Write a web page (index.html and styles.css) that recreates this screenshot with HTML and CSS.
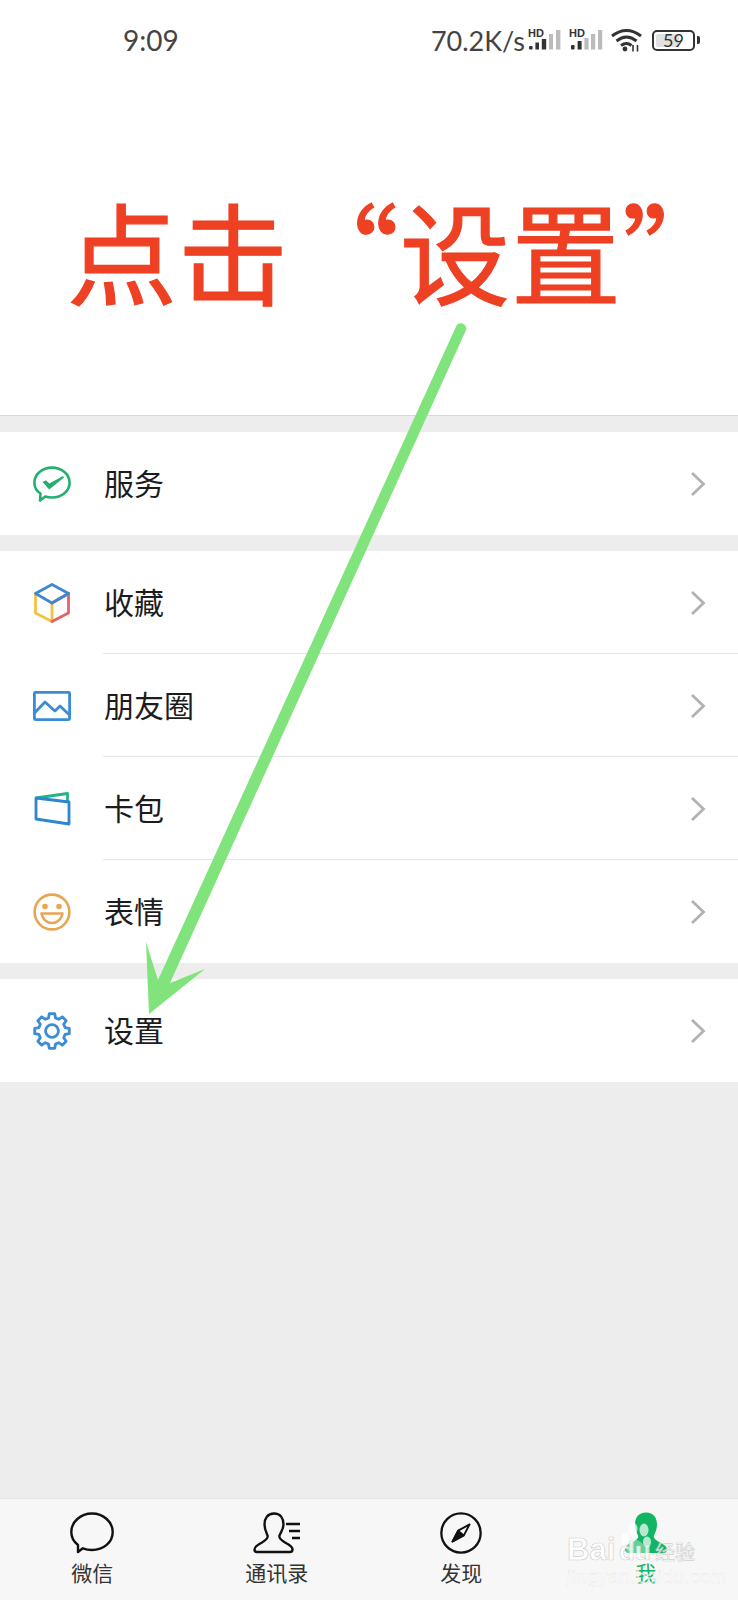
FILE: index.html
```html
<!DOCTYPE html>
<html lang="zh-CN">
<head>
    <meta charset="UTF-8">
    <meta name="viewport" content="width=device-width, initial-scale=1.0">
    <title>点击设置</title>
    <link rel="stylesheet" href="styles.css">
</head>
<body>

    <div class="phone">
        <div class="top-area">
            <div class="status-bar">
                <span class="clock">9:09</span>
                <div class="status-right">
                    <span class="net-speed">70.2K/s</span>
                    <svg class="signal" width="36" height="24" viewBox="0 0 36 24">
                        <text x="1" y="9" class="hd-text">HD</text>
                        <rect x="2" y="18" width="3.6" height="3.5" rx="1" fill="#333"/>
                        <rect x="8.4" y="14.5" width="3.6" height="7" fill="#333"/>
                        <rect x="14.8" y="11" width="4.4" height="10.5" fill="#333"/>
                        <rect x="22" y="6" width="4" height="15.5" fill="#bbb"/>
                        <rect x="29" y="2" width="4.4" height="19.5" fill="#bbb"/>
                    </svg>
                    <svg class="signal second" width="36" height="24" viewBox="0 0 36 24">
                        <text x="1" y="9" class="hd-text">HD</text>
                        <rect x="3" y="17" width="3.6" height="4.5" rx="1" fill="#333"/>
                        <rect x="9.6" y="13" width="4" height="8.5" fill="#333"/>
                        <rect x="16.4" y="10" width="4.2" height="11.5" fill="#bbb"/>
                        <rect x="23" y="6" width="4.2" height="15.5" fill="#bbb"/>
                        <rect x="30" y="2" width="4.2" height="19.5" fill="#bbb"/>
                    </svg>
                    <svg class="wifi" width="31" height="24" viewBox="0 0 31 24" fill="none" stroke="#333" stroke-width="3">
                        <path d="M1 8 Q15.5 -3 30 8"/>
                        <path d="M5.5 13 Q15.5 5 25.5 13"/>
                        <path d="M10 17.5 Q15.5 13.5 20.5 17.5"/>
                        <circle cx="14" cy="21" r="2.4" fill="#333" stroke="none"/>
                        <path d="M22 17 V23.5 M26.5 17 V23.5" stroke-width="1.6"/>
                    </svg>
                    <div class="battery">
                        <div class="battery-body"><span class="battery-fill"></span><span class="battery-num">59</span></div>
                        <span class="battery-tip"></span>
                    </div>
                </div>
            </div>
            <div class="big-title">点击“设置”</div>
        </div>

        <div class="menu-group">
            <div class="menu-row">
                <svg class="menu-icon" width="38" height="36" viewBox="0 0 38 36" fill="none">
                    <path d="M7.5 27.5 C3.5 25 1.4 21.3 1.4 16.7 C1.4 8.4 9.2 1.6 19 1.6 C28.8 1.6 36.6 8.4 36.6 16.7 C36.6 25 28.8 31.5 19 31.5 C16.6 31.5 14.4 31.2 12.3 30.5 L7 34.5 Z" stroke="#22b06e" stroke-width="2.6" stroke-linejoin="round"/>
                    <path d="M9.5 16 L13 14.2 L16.4 17.6 L30 10 L31 11.4 L16.2 23.5 Z" fill="#22b06e"/>
                </svg>
                <span class="menu-label">服务</span>
                <svg class="chevron" width="16" height="26" viewBox="0 0 16 26"><path d="M2 2 L13.5 13 L2 24" fill="none" stroke="#b2b2b2" stroke-width="2.8"/></svg>
            </div>
        </div>

        <div class="menu-group">
            <div class="menu-row">
                <svg class="menu-icon" width="38" height="40" viewBox="0 0 38 40" fill="none" stroke-width="2.8" stroke-linejoin="round" stroke-linecap="round">
                    <path d="M2.5 30 V10.5 M2.5 30 L19 38.5 V20" stroke="#f2c245"/>
                    <path d="M35.5 10.5 V30 L19 38.5" stroke="#e0636a"/>
                    <path d="M35.5 10.5 L19 20" stroke="#e0636a"/>
                    <path d="M19 1.5 L35.5 10.5 L19 20 L2.5 10.5 Z" stroke="#3f87d4"/>
                </svg>
                <span class="menu-label">收藏</span>
                <svg class="chevron" width="16" height="26" viewBox="0 0 16 26"><path d="M2 2 L13.5 13 L2 24" fill="none" stroke="#b2b2b2" stroke-width="2.8"/></svg>
            </div>
            <div class="menu-row">
                <svg class="menu-icon" width="38" height="30" viewBox="0 0 38 30" fill="none" stroke="#3a8cd6" stroke-width="2.8" stroke-linejoin="round">
                    <rect x="1.4" y="1.4" width="35.2" height="27.2" rx="1"/>
                    <path d="M1.5 22 L12 11 L22 20 L27 15 L36.5 24"/>
                </svg>
                <span class="menu-label">朋友圈</span>
                <svg class="chevron" width="16" height="26" viewBox="0 0 16 26"><path d="M2 2 L13.5 13 L2 24" fill="none" stroke="#b2b2b2" stroke-width="2.8"/></svg>
            </div>
            <div class="menu-row">
                <svg class="menu-icon" width="38" height="34" viewBox="0 0 38 34" fill="none" stroke-width="2.8" stroke-linejoin="round">
                    <path d="M3 6 L34.5 1.5 V9" stroke="#22b58a"/>
                    <path d="M3 6 L36 10 V32 L3 27 Z" stroke="#2f86d0"/>
                </svg>
                <span class="menu-label">卡包</span>
                <svg class="chevron" width="16" height="26" viewBox="0 0 16 26"><path d="M2 2 L13.5 13 L2 24" fill="none" stroke="#b2b2b2" stroke-width="2.8"/></svg>
            </div>
            <div class="menu-row">
                <svg class="menu-icon" width="38" height="38" viewBox="0 0 38 38" fill="none" stroke="#e8a655" stroke-width="2.6">
                    <circle cx="19" cy="19" r="17.4"/>
                    <circle cx="12" cy="13.5" r="2.8" fill="#e8a655" stroke="none"/>
                    <circle cx="26" cy="13.5" r="2.8" fill="#e8a655" stroke="none"/>
                    <path d="M8.5 20.5 H29.5 C28.5 26.5 24 30 19 30 C14 30 9.5 26.5 8.5 20.5 Z" stroke-linejoin="round"/>
                </svg>
                <span class="menu-label">表情</span>
                <svg class="chevron" width="16" height="26" viewBox="0 0 16 26"><path d="M2 2 L13.5 13 L2 24" fill="none" stroke="#b2b2b2" stroke-width="2.8"/></svg>
            </div>
        </div>

        <div class="menu-group">
            <div class="menu-row">
                <svg class="menu-icon" width="38" height="38" viewBox="-19 -19 38 38" fill="none" stroke="#3a8cd6" stroke-width="2.8" stroke-linejoin="round">
                    <path d="M-3.49 -13.04 L-2.74 -17.28 L2.74 -17.28 L3.49 -13.04 L6.75 -11.69 L10.29 -14.16 L14.16 -10.29 L11.69 -6.75 L13.04 -3.49 L17.28 -2.74 L17.28 2.74 L13.04 3.49 L11.69 6.75 L14.16 10.29 L10.29 14.16 L6.75 11.69 L3.49 13.04 L2.74 17.28 L-2.74 17.28 L-3.49 13.04 L-6.75 11.69 L-10.29 14.16 L-14.16 10.29 L-11.69 6.75 L-13.04 3.49 L-17.28 2.74 L-17.28 -2.74 L-13.04 -3.49 L-11.69 -6.75 L-14.16 -10.29 L-10.29 -14.16 L-6.75 -11.69 Z"/>
                    <circle r="6.4"/>
                </svg>
                <span class="menu-label">设置</span>
                <svg class="chevron" width="16" height="26" viewBox="0 0 16 26"><path d="M2 2 L13.5 13 L2 24" fill="none" stroke="#b2b2b2" stroke-width="2.8"/></svg>
            </div>
        </div>

        <div class="filler"></div>

        <div class="tab-bar">
            <div class="tab">
                <svg width="44" height="42" viewBox="0 0 44 42" fill="none" stroke="#111" stroke-width="2.4" stroke-linejoin="round">
                    <path d="M8 33 C3.5 29.5 1.3 25.5 1.3 20 C1.3 10 10.5 1.5 22 1.5 C33.5 1.5 42.7 10 42.7 20 C42.7 30.5 33.5 38 22 38 C18.5 38 15.5 37.4 12.8 36.3 L8 40 Z"/>
                </svg>
                <span class="tab-label">微信</span>
            </div>
            <div class="tab">
                <svg width="48" height="42" viewBox="0 0 48 42" fill="none" stroke="#111" stroke-width="2.4" stroke-linejoin="round">
                    <path d="M21 1.5 C14.5 1.5 11.5 6.5 11.5 12.5 C11.5 17 13 20 14.5 23.5 C15.5 26 13 28 9 30.5 C5 32.5 1.5 34.5 1.5 37.5 C1.5 39 2.5 40 4 40 H37 C38.5 40 39.5 39 39.5 37.5 C39.5 34.5 36 32.5 32 30.5 C28 28 25.5 26 26.5 23.5 C28 20 30.5 17 30.5 12.5 C30.5 6.5 27.5 1.5 21 1.5 Z"/>
                    <path d="M33 12 H47 M36 19 H47 M39 26 H47" stroke-width="2.4"/>
                </svg>
                <span class="tab-label">通讯录</span>
            </div>
            <div class="tab">
                <svg width="44" height="44" viewBox="0 0 44 44" fill="none" stroke="#111" stroke-width="2.4" stroke-linejoin="round">
                    <circle cx="22" cy="22" r="20.6"/>
                    <path d="M31 13 L25 24.5 L13 31 L19 19.5 Z" stroke-width="2"/>
                    <path d="M13 31 L25 24.5 L19 19.5 Z" fill="#111" stroke-width="1.6"/>
                </svg>
                <span class="tab-label">发现</span>
            </div>
            <div class="tab tab-active">
                <svg width="44" height="42" viewBox="0 0 44 42" fill="#11b563">
                    <path d="M22 0.5 C14.5 0.5 11 6 11 12.5 C11 17 12.5 20 14 23.5 C15 26 12.5 28 8 30.5 C4 32.5 1 34.5 1 37.5 C1 39.5 2.5 41 4 41 H40 C41.5 41 43 39.5 43 37.5 C43 34.5 40 32.5 36 30.5 C31.5 28 29 26 30 23.5 C31.5 20 33 17 33 12.5 C33 6 29.5 0.5 22 0.5 Z"/>
                </svg>
                <span class="tab-label">我</span>
            </div>
        </div>

        <!-- red title points at this row -->
        <svg class="arrow" width="738" height="1600" viewBox="0 0 738 1600">
            <path d="M456.5 325.5 C458.5 322 465.5 322.5 466.5 329 L170 983 L205 969 L149 1014 L146 942 L158 980 Z" fill="#81e37c"/>
        </svg>

        <div class="watermark">
            <svg class="wm-paw" width="32" height="36" viewBox="0 0 32 36" fill="#fff" fill-opacity="0.7">
                <ellipse cx="6" cy="17" rx="4.5" ry="6"/>
                <ellipse cx="14" cy="7" rx="4.5" ry="6.5"/>
                <ellipse cx="25" cy="8" rx="4.5" ry="6.5"/>
                <ellipse cx="28" cy="20" rx="4" ry="5.5"/>
                <path d="M17 18 C11 18 5 28 6 33 C8 36 25 36 28 33 C30 29 23 18 17 18 Z" fill-opacity="0.35"/>
            </svg>
            <div class="wm-line">
                <span class="wm-bai">Bai</span>
                <span class="wm-du">du</span>
                <span class="wm-jy">经验</span>
            </div>
            <div class="wm-url">jingyan.baidu.com</div>
        </div>
    </div>

</body>
</html>
```

FILE: styles.css
```css
body {
    margin: 0;
    font-family: "Noto Sans CJK SC", "Noto Sans", sans-serif;
    background-color: #ededed;
}
.phone {
    position: relative;
    width: 738px;
    height: 1600px;
    display: flex;
    flex-direction: column;
    overflow: hidden;
    background-color: #ededed;
}
.top-area {
    height: 415px;
    background: #fff;
    border-bottom: 1px solid #d8d8d8;
}
.status-bar {
    height: 80px;
    display: flex;
    justify-content: space-between;
    align-items: center;
    padding: 0 38px 0 123px;
    color: #444;
    font-family: "Lato", "Noto Sans", sans-serif;
    font-size: 28px;
}
.status-right {
    display: flex;
    align-items: center;
}
.net-speed {
    margin-right: 1px;
    font-size: 27px;
}
.signal {
    display: block;
    margin: 0 4px 0 1px;
}
.signal.second {
    margin-right: 7px;
}
.hd-text {
    font-family: "Liberation Sans", sans-serif;
    font-size: 11px;
    font-weight: bold;
    fill: #333;
}
.wifi {
    display: block;
    margin-right: 10px;
}
.battery {
    display: flex;
    align-items: center;
}
.battery-body {
    position: relative;
    width: 39px;
    height: 17px;
    border: 2px solid #333;
    border-radius: 5px;
    display: flex;
    align-items: center;
    justify-content: center;
}
.battery-fill {
    position: absolute;
    left: 2px;
    top: 2px;
    bottom: 2px;
    width: 23px;
    background: #e0e0e0;
    border-radius: 2px;
}
.battery-num {
    position: relative;
    font-size: 18px;
    line-height: 18px;
    color: #333;
}
.battery-tip {
    width: 3px;
    height: 8px;
    margin-left: 2px;
    background: #333;
    border-radius: 0 2px 2px 0;
}
.big-title {
    padding: 94px 0 0 67px;
    font-size: 110px;
    line-height: 150px;
    font-weight: 400;
    letter-spacing: 1px;
    color: #ee4023;
    -webkit-text-stroke: 1.2px #ee4023;
    white-space: nowrap;
}
.menu-group {
    margin-top: 16px;
    background: #fff;
}
.menu-group:last-of-type {
    margin-top: 17px;
}
.menu-row {
    position: relative;
    height: 103px;
    display: flex;
    align-items: center;
    padding-right: 32px;
}
.menu-row + .menu-row::before {
    content: "";
    position: absolute;
    left: 103px;
    right: 0;
    top: -1px;
    height: 1px;
    background: #e6e6e6;
}
.menu-icon {
    display: block;
    margin-left: 33px;
    flex: none;
}
.menu-label {
    margin: -3px 0 0 33px;
    flex: 1;
    font-size: 30px;
    color: #1c1c1c;
}
.filler {
    flex: 1;
}
.tab-bar {
    height: 102px;
    box-sizing: border-box;
    border-top: 1px solid #e4e4e4;
    background: #f7f7f7;
    display: grid;
    grid-template-columns: repeat(4, 1fr);
}
.tab {
    display: flex;
    flex-direction: column;
    align-items: center;
    padding-top: 13px;
}
.tab svg {
    display: block;
    height: 42px;
}
.tab-label {
    margin-top: 3px;
    font-size: 21px;
    line-height: 30px;
    color: #333;
}
.tab-active .tab-label {
    color: #11b563;
}
.arrow {
    position: absolute;
    left: 0;
    top: 0;
    pointer-events: none;
}
.watermark {
    position: absolute;
    left: 567px;
    top: 1534px;
    width: 135px;
    color: rgba(255, 255, 255, 0.8);
    -webkit-text-stroke: 0.7px rgba(190, 190, 190, 0.7);
}
.wm-paw {
    position: absolute;
    left: 52px;
    top: -12px;
}
.wm-line {
    display: flex;
    align-items: baseline;
    height: 32px;
    font-family: "Liberation Sans", sans-serif;
    font-size: 31px;
    line-height: 32px;
    font-weight: bold;
}
.wm-bai {
    width: 52px;
}
.wm-du {
    width: 36px;
    font-size: 26px;
}
.wm-jy {
    font-family: "Noto Sans CJK SC", sans-serif;
    font-size: 20px;
    font-weight: 400;
    white-space: nowrap;
}
.wm-url {
    margin-top: 1px;
    font-family: "Liberation Sans", sans-serif;
    font-size: 19px;
    line-height: 20px;
    letter-spacing: 0.4px;
    white-space: nowrap;
    -webkit-text-stroke: 0.4px rgba(200, 200, 200, 0.45);
}
```
